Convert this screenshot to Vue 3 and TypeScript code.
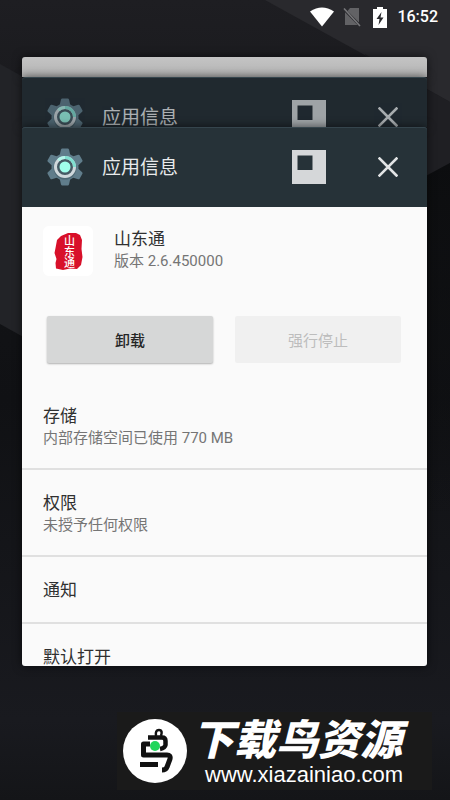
<script setup lang="ts">
interface Setting {
  title: string
  detail?: string
}

const headers: string[] = ['back', 'front']
const settings: Setting[] = [
  { title: '存储', detail: '内部存储空间已使用 770 MB' },
  { title: '权限', detail: '未授予任何权限' },
  { title: '通知' },
  { title: '默认打开' },
]
const teeth: number[] = [0, 60, 120, 180, 240, 300]
</script>

<template>
  <div class="screen">
    <svg class="wallpaper" viewBox="0 0 450 800" preserveAspectRatio="none" aria-hidden="true">
      <defs>
        <linearGradient id="base" x1="0" y1="0" x2="0" y2="1">
          <stop offset="0" stop-color="#1e1e22" />
          <stop offset="0.35" stop-color="#121316" />
          <stop offset="0.5" stop-color="#101114" />
          <stop offset="0.9" stop-color="#191a1f" />
          <stop offset="1" stop-color="#141518" />
        </linearGradient>
        <linearGradient id="shade" x1="0" y1="0" x2="0" y2="1">
          <stop offset="0" stop-color="#0c0d0f" />
          <stop offset="1" stop-color="#0c0d0f" stop-opacity="0" />
        </linearGradient>
      </defs>
      <rect width="450" height="800" fill="url(#base)" />
      <path d="M265 0H450V102Z" fill="#29292d" />
      <path d="M0 64L36 84V344L0 324Z" fill="#222327" />
      <path d="M365 54L450 102V163L400 190Z" fill="#1f1f23" />
      <path d="M400 190L450 163V520H400Z" fill="url(#shade)" />
    </svg>

    <header class="status">
      <svg width="26" height="20" viewBox="0 0 26 20" aria-label="Wi-Fi">
        <path d="M1 4.5Q13-3.5 25 4.5L13 19.5Z" fill="#fff" />
      </svg>
      <svg width="18" height="20" viewBox="0 0 18 20" aria-label="无 SIM 卡">
        <path d="M7 1H16V15.5L4.5 4ZM2 5.2L14.6 18H2Z" fill="#626265" />
        <path d="M1 1.5L17 19" stroke="#77777a" stroke-width="1.6" />
      </svg>
      <svg width="14" height="22" viewBox="0 0 14 22" aria-label="正在充电">
        <path d="M4 1H10V3H14V22H0V3H4Z" fill="#fff" />
        <path d="M8.5 6L3.5 13H6.5L5.5 19L10.5 11.5H7.5Z" fill="#29292d" />
      </svg>
      <time>16:52</time>
    </header>

    <main class="stack">
      <div class="card blank"></div>
      <section v-for="kind in headers" :key="kind" class="card" :class="kind">
        <div class="bar">
          <svg class="gear" viewBox="0 0 36 38" aria-hidden="true">
            <g fill="#607d8b">
              <path
                v-for="angle in teeth"
                :key="angle"
                d="M12.5 8L14 1.5Q14.3.5 15.2.5H20.8Q21.7.5 22 1.5L23.5 8Z"
                :transform="`rotate(${angle} 18 19)`"
              />
              <circle cx="18" cy="19" r="13.5" />
            </g>
            <circle cx="18" cy="20" r="11.5" fill="#4f6975" />
            <circle cx="18" cy="19" r="9.5" fill="#455a64" stroke="#cfd8dc" stroke-width="3" />
            <path d="M18 9.5A9.5 9.5 0 0 1 27.5 19" fill="none" stroke="#80dfd0" stroke-width="3" />
            <path d="M11.3 12.3A9.5 9.5 0 0 1 18 9.5" fill="none" stroke="#b2f5ea" stroke-width="3" />
            <circle cx="18" cy="19" r="5.5" fill="#a0ffec" />
          </svg>
          <h2>应用信息</h2>
          <button class="window" type="button" aria-label="调整窗口">
            <svg viewBox="0 0 34 34"><path d="M0 0H34V34H0ZM5.5 5.5V20H20.5V5.5Z" fill="#d5d7d9" fill-rule="evenodd" /></svg>
          </button>
          <button class="close" type="button" aria-label="关闭">
            <svg viewBox="0 0 20 20"><path d="M1.5 1.5L18.5 18.5M18.5 1.5L1.5 18.5" stroke="#e2e4e5" stroke-width="2.6" stroke-linecap="square" /></svg>
          </button>
        </div>
        <div v-if="kind === 'front'" class="body">
          <div class="app">
            <svg class="seal" viewBox="0 0 50 50" role="img" aria-label="山东通">
              <rect width="50" height="50" rx="6" fill="#fff" />
              <path d="M14 14L18 10L25 7L33 7L37 9L39 14L38.5 23L39.5 31L38 39L34 43L27 42.5L20 44L13 42.5L12.5 37L13.5 33L11.5 27L12.5 22Z" fill="#d8102a" />
              <text class="seal-text" x="25" y="9">山东通</text>
            </svg>
            <div class="title">
              <h1>山东通</h1>
              <p>版本 2.6.450000</p>
            </div>
          </div>
          <div class="actions">
            <button type="button">卸载</button>
            <button type="button" disabled>强行停止</button>
          </div>
          <ul>
            <li v-for="item in settings" :key="item.title">
              <h3>{{ item.title }}</h3>
              <p v-if="item.detail">{{ item.detail }}</p>
            </li>
          </ul>
        </div>
      </section>
    </main>

    <footer class="brand">
      <svg class="bird" viewBox="0 0 64 64" aria-hidden="true">
        <circle cx="32" cy="32" r="32" fill="#fff" />
        <g fill="none" stroke="#111" stroke-width="5" stroke-linejoin="round">
          <path d="M33 17Q32 11 36 11Q40 11 38 17" stroke-width="2.5" />
          <path d="M25 18.5H39Q42.5 18.5 42.5 22V26Q42 29 37 30" stroke-width="4.5" />
          <path d="M27 25H20.5V36H44Q48 36 47 40L44 48Q43 51 39 51" />
          <path d="M17 45.5H35" />
        </g>
        <circle cx="32" cy="27" r="5" fill="#20d65b" />
      </svg>
      <div class="words">
        <strong>下载鸟资源</strong>
        <a href="#">www.xiazainiao.com</a>
      </div>
    </footer>
  </div>
</template>

<style>
body {
  margin: 0;
  background: #121317;
}
</style>

<style scoped>
.screen {
  position: relative;
  box-sizing: border-box;
  min-height: 100vh;
  overflow: hidden;
  font-family: Roboto, "Noto Sans CJK SC", sans-serif;
}
.wallpaper {
  position: absolute;
  inset: 0;
  width: 100%;
  height: 100%;
}
h1, h2, h3, p, ul {
  margin: 0;
  padding: 0;
  font-weight: 400;
}
button {
  padding: 0;
  border: 0;
  background: none;
  font-family: inherit;
}
button svg {
  display: block;
  width: 100%;
}
.status {
  position: relative;
  display: flex;
  align-items: center;
  justify-content: flex-end;
  height: 34px;
  padding-right: 12px;
  color: #fff;
}
.status svg:nth-child(2) {
  margin-left: 8px;
}
.status svg:nth-child(3) {
  margin: 0 10px 0 12px;
}
.status time {
  font-size: 16px;
  font-weight: 500;
  line-height: 20px;
}
.stack {
  position: relative;
  margin: 23px 23px 0 22px;
}
.card {
  position: relative;
  border-radius: 3px;
  box-shadow: 0 0 10px rgba(0, 0, 0, 0.6);
}
.blank {
  height: 20px;
  border-radius: 3px 3px 0 0;
  background: linear-gradient(#c4c4c4, #b3b3b3);
}
.back {
  height: 50px;
  overflow: hidden;
  border-radius: 3px 3px 0 0;
  background: #20292f;
}
.back .bar > * {
  opacity: 0.7;
}
.front {
  background: #263238;
}
.bar {
  box-sizing: border-box;
  display: flex;
  align-items: center;
  height: 80px;
  padding: 0 29px 1px 25px;
  border-radius: 3px 3px 0 0;
  box-shadow: inset 0 1px #35454d;
}
.gear {
  width: 36px;
  height: 38px;
}
.bar h2 {
  flex: 1;
  margin-left: 19px;
  padding-top: 2px;
  color: #e8eaeb;
  font-size: 19px;
  line-height: 28px;
}
.window {
  width: 34px;
  height: 34px;
}
.close {
  width: 20px;
  height: 20px;
  margin-left: 52px;
}
.body {
  height: 459px;
  overflow: hidden;
  border-radius: 0 0 3px 3px;
  background: #fafafa;
}
.app {
  display: flex;
  gap: 21px;
  padding: 19px 21px 0;
}
.title {
  padding-top: 1px;
}
.seal {
  width: 50px;
  height: 50px;
}
.seal-text {
  fill: #fff;
  font-size: 11px;
  font-weight: 500;
  writing-mode: vertical-rl;
}
.app h1 {
  color: #303030;
  font-size: 17px;
  line-height: 24px;
}
h3 {
  margin-bottom: 2px;
  color: #303030;
  font-size: 17px;
  line-height: 20px;
}
.app p, li p {
  color: #757575;
  font-size: 15px;
  line-height: 20px;
}
.actions {
  display: grid;
  grid-template-columns: 1fr 1fr;
  gap: 22px;
  padding: 40px 26px 0 25px;
}
.actions button {
  height: 47px;
  border-radius: 2px;
  background: #d6d7d7;
  box-shadow: 0 1px 2px rgba(0, 0, 0, 0.3);
  color: #252525;
  font-size: 15px;
  font-weight: 500;
}
.actions button:disabled {
  background: #f0f0f0;
  box-shadow: none;
  color: #bdbdbd;
  font-weight: 400;
}
ul {
  margin-top: 20px;
  list-style: none;
}
li {
  padding: 23px 21px 20px;
  border-bottom: 2px solid #e0e0e0;
}
.brand {
  position: relative;
  box-sizing: border-box;
  display: flex;
  align-items: center;
  gap: 4px;
  width: 315px;
  height: 78px;
  margin: 46px 18px 0 auto;
  padding-left: 6px;
  background: #1a1a1a;
}
.bird {
  width: 64px;
  height: 64px;
}
.words {
  display: flex;
  flex-direction: column;
  align-items: center;
  padding-top: 6px;
}
.words strong {
  color: #fff;
  font-size: 42px;
  font-style: italic;
  font-weight: 900;
  line-height: 42px;
}
.words a {
  padding-left: 14px;
  color: #fff;
  font-family: "Liberation Sans", Arial, sans-serif;
  font-size: 22px;
  line-height: 26px;
  text-decoration: none;
}
</style>
